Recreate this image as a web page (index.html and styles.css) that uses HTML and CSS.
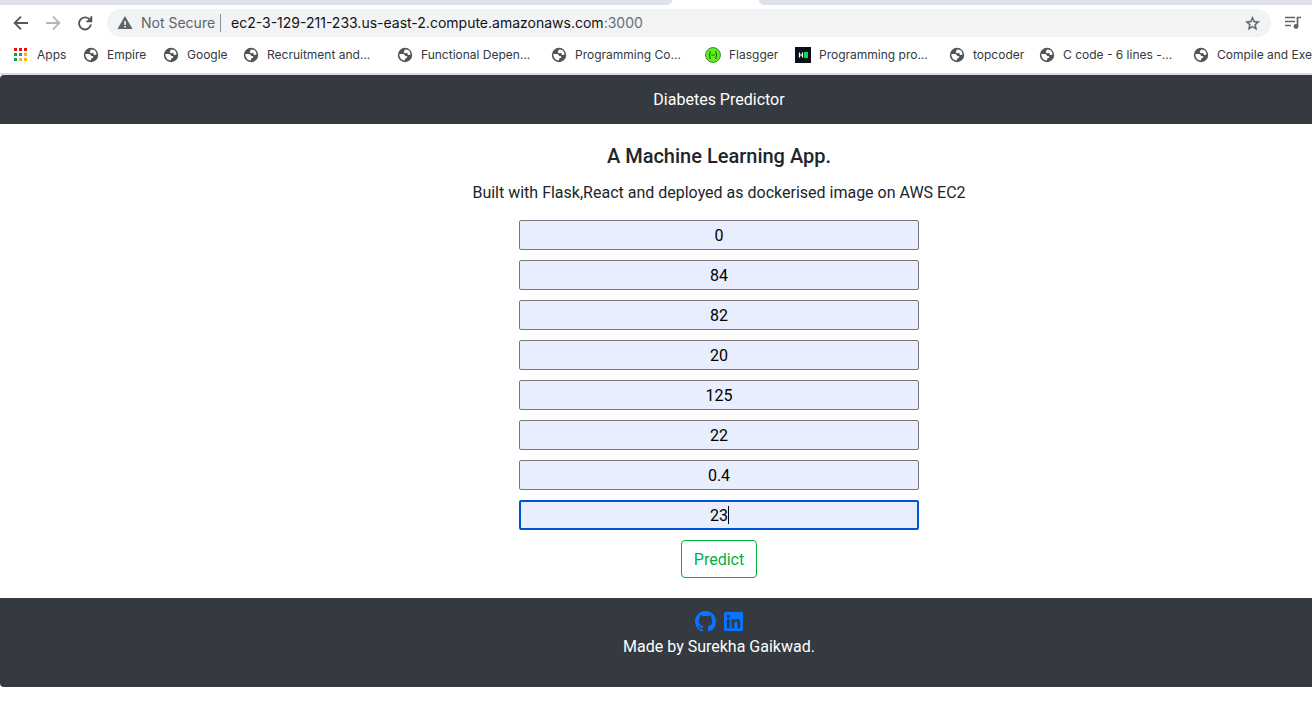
FILE: index.html
```html
<!DOCTYPE html>
<html lang="en">
<head>
<meta charset="utf-8">
<title>Diabetes Predictor</title>
<link rel="stylesheet" href="styles.css">
</head>
<body>
<svg class="defs" aria-hidden="true">
  <symbol id="globe" viewBox="0 0 16 16">
    <circle cx="8" cy="8" r="7.200" fill="#505357"/>
    <path d="M7.900 2.600L11.300 2.900Q13.600 4.600 13.600 7.500Q12.200 8.300 10.900 7.700L10.300 6.100L8 6.300L6.600 5.300L7.200 4Z" fill="#fff"/>
    <path d="M2.500 6.900L6 7.100Q7.900 7.400 8.200 8.900L10.300 9.200L10 10.800L8.500 11.200L7.700 13.400Q3 13.300 2.400 8.300Z" fill="#fff"/>
  </symbol>
</svg>
<header class="browser">
  <div class="tabs"><span class="tab-left"></span><span class="tab-right"></span></div>
  <div class="toolbar">
    <button class="tool" aria-label="Back"><svg viewBox="0 0 24 24"><path class="line" d="M22.500 12H3M12 2.500L2.500 12L12 21.500"/></svg></button>
    <button class="tool muted" aria-label="Forward"><svg viewBox="0 0 24 24"><path class="line" d="M1.500 12H21M12 2.500L21.500 12L12 21.500"/></svg></button>
    <button class="tool" aria-label="Reload"><svg viewBox="0 0 24 24"><path class="line" d="M19.500 7.500A9 9 0 1 0 21 14M21.500 2V9.500H14"/><path d="M22.500 2V10.500H14Z" fill="currentColor"/></svg></button>
    <div class="address">
      <svg class="warning" viewBox="0 0 16 16"><path d="M8 1L15.500 14H.5Z" fill="#5f6368"/><path d="M7.300 6h1.500v4H7.300zM7.300 11h1.500v1.500H7.300z" fill="#fff"/></svg>
      <span class="security">Not Secure</span>
      <span class="url">ec2-3-129-211-233.us-east-2.compute.amazonaws.com<span class="port">:3000</span></span>
      <button class="star" aria-label="Bookmark this page"><svg viewBox="0 0 24 24"><path d="M22 9.240l-7.190-.62L12 2 9.190 8.630 2 9.240l5.460 4.730L5.820 21 12 17.270 18.180 21l-1.630-7.030zM12 15.400l-3.760 2.270 1-4.280-3.320-2.880 4.380-.38L12 6.100l1.710 4.040 4.380.38-3.320 2.880 1 4.280z" fill="#5f6368" stroke="#5f6368" stroke-width=".5"/></svg></button>
    </div>
    <button class="media" aria-label="Media"><svg viewBox="0 0 18 16"><path d="M1 2.500h10M1 6.500h10M1 10.500h6" stroke="#5f6368" stroke-width="1.700"/><path d="M17 2.500h-3.500v9" fill="none" stroke="#5f6368" stroke-width="1.700"/><circle cx="12" cy="11.500" r="2.400" fill="#5f6368"/></svg></button>
  </div>
  <nav class="bookmarks" aria-label="Bookmarks">
    <a href="#" class="apps"><svg viewBox="0 0 16 16"><path d="M1 1h3v3H1zM6 1h3v3H6zM11 1h3v3h-3z" fill="#f20d0d"/><path d="M1 6h3v3H1zM1 11h3v3H1z" fill="#0f9d58"/><path d="M6 6h3v3H6z" fill="#1a86f7"/><path d="M11 6h3v3h-3zM6 11h3v3H6zM11 11h3v3h-3z" fill="#fbb30a"/></svg>Apps</a>
    <a href="#" class="short"><svg><use href="#globe"/></svg>Empire</a>
    <a href="#" class="short"><svg><use href="#globe"/></svg>Google</a>
    <a href="#" class="long"><svg><use href="#globe"/></svg>Recruitment and...</a>
    <a href="#" class="long"><svg><use href="#globe"/></svg>Functional Depen...</a>
    <a href="#" class="long"><svg><use href="#globe"/></svg>Programming Co...</a>
    <a href="#" class="medium"><svg viewBox="0 0 16 16"><circle cx="8" cy="8" r="7.400" fill="#5bf516" stroke="#3c7f3a"/><path d="M6 4.500Q4.700 4.500 4.800 6Q5 8 3.700 8Q5 8 4.800 10Q4.700 11.500 6 11.500M10 4.500Q11.300 4.500 11.200 6Q11 8 12.300 8Q11 8 11.200 10Q11.300 11.500 10 11.500M6.200 8h3.600" fill="none" stroke="#245c2c" stroke-width="1.100"/></svg>Flasgger</a>
    <a href="#" class="long"><svg viewBox="0 0 16 16"><path d="M0 0h16v16H0z" fill="#0b111b"/><path d="M4.500 5.500v5M7.500 5.500v5M4.500 8h3" stroke="#fff" stroke-width="1.200"/><path d="M9 5h4v6H9z" fill="#05e052"/></svg>Programming pro...</a>
    <a href="#" class="medium"><svg><use href="#globe"/></svg>topcoder</a>
    <a href="#" class="long"><svg><use href="#globe"/></svg>C code - 6 lines -...</a>
    <a href="#" class="long"><svg><use href="#globe"/></svg>Compile and Exe</a>
  </nav>
</header>
<div class="app">
  <header class="band top">Diabetes Predictor</header>
  <main>
    <h1>A Machine Learning App.</h1>
    <p>Built with Flask,React and deployed as dockerised image on AWS EC2</p>
    <form>
      <input type="text" aria-label="Pregnancies" value="0">
      <input type="text" aria-label="Glucose" value="84">
      <input type="text" aria-label="Blood pressure" value="82">
      <input type="text" aria-label="Skin thickness" value="20">
      <input type="text" aria-label="Insulin" value="125">
      <input type="text" aria-label="BMI" value="22">
      <input type="text" aria-label="Pedigree function" value="0.4">
      <div class="active"><input type="text" aria-label="Age" value="23"><span class="caret"></span></div>
      <button type="button" class="predict">Predict</button>
    </form>
  </main>
  <footer class="band bottom">
    <div class="social">
      <a href="#" aria-label="GitHub"><svg width="21" height="21" viewBox="0 0 16 16"><path fill="currentColor" d="M8 0C3.580 0 0 3.580 0 8c0 3.540 2.290 6.530 5.470 7.590.4.070.55-.17.55-.38 0-.19-.01-.82-.01-1.490-2.010.37-2.530-.49-2.690-.94-.09-.23-.48-.94-.82-1.130-.28-.15-.68-.52-.01-.53.63-.01 1.080.58 1.230.82.72 1.210 1.870.87 2.330.66.07-.52.28-.87.51-1.070-1.780-.2-3.640-.89-3.640-3.950 0-.87.31-1.590.82-2.150-.08-.2-.36-1.020.08-2.120 0 0 .67-.21 2.200.82.64-.18 1.320-.27 2-.27s1.360.09 2 .27c1.530-1.040 2.200-.82 2.200-.82.44 1.100.16 1.920.08 2.120.51.56.82 1.270.82 2.150 0 3.070-1.870 3.750-3.650 3.950.29.25.54.73.54 1.480 0 1.070-.01 1.930-.01 2.200 0 .21.15.46.55.38A8.010 8.010 0 0 0 16 8c0-4.420-3.580-8-8-8z"/></svg></a>
      <a href="#" aria-label="LinkedIn"><svg width="19" height="19" viewBox="0 0 448 448"><path fill="currentColor" d="M416 0H31.900C14.300 0 0 14.500 0 32.300v383.400C0 433.500 14.300 448 31.900 448H416c17.600 0 32-14.500 32-32.300V32.300C448 14.500 433.600 0 416 0zM135.400 384H69V170.200h66.500V384zM102.200 141c-21.300 0-38.500-17.300-38.500-38.500S80.900 64 102.200 64c21.200 0 38.500 17.300 38.500 38.500 0 21.300-17.200 38.500-38.500 38.500zm282.100 243h-66.400V280c0-24.800-.5-56.700-34.500-56.700-34.600 0-39.900 27-39.900 54.900V384h-66.400V170.200h63.700v29.200h.9c8.900-16.800 30.600-34.500 62.900-34.500 67.200 0 79.700 44.300 79.700 101.900V384z"/></svg></a>
    </div>
    <div>Made by Surekha Gaikwad.</div>
  </footer>
</div>
</body>
</html>
```
FILE: styles.css
```css
* { box-sizing: border-box; }
body { margin: 0; background: #fff; font-family: Roboto, "Liberation Sans", sans-serif; font-size: 16px; line-height: 24px; color: #212529; }
button { border: 0; background: none; padding: 0; font: inherit; }
svg { display: block; }
.defs { position: absolute; width: 0; height: 0; }
.browser { border-bottom: 2px solid #dadbdd; height: 75px; font-family: Inter, "Liberation Sans", sans-serif; }
.tabs { display: flex; justify-content: space-between; height: 5px; gap: 87px; }
.tab-left { flex: 0 0 51.2%; background: #dee1e9; border-bottom-right-radius: 5px; }
.tab-right { flex: 1; background: #dee1e9; border-bottom-left-radius: 5px; }
.toolbar { display: flex; align-items: center; height: 36px; padding: 0 10px 0 13px; }
.tool { width: 16px; height: 16px; margin-right: 16px; color: #54585d; }
.tool.muted { color: #b5b7b9; }
.line { fill: none; stroke: currentColor; stroke-width: 2.800; }
.address { flex: 1; display: flex; align-items: center; height: 28px; border-radius: 14px; background: #f1f3f4; padding: 0 10px; margin-right: 13px; margin-left: -2px; font-size: 14px; line-height: 18px; }
.warning { width: 16px; height: 16px; margin-right: 8px; }
.security { color: #5f6368; border-right: 1px solid #8f9295; width: 80px; margin-right: 10px; white-space: nowrap; }
.url { flex: 1; color: #111214; }
.port { color: #6a6e73; }
.star svg { width: 17px; height: 17px; }
.media svg { width: 18px; height: 16px; }
.bookmarks { display: flex; padding-left: 13px; height: 28px; align-items: center; overflow: hidden; }
.bookmarks a { display: flex; flex: none; align-items: center; gap: 8px; color: #35383c; text-decoration: none; font-size: 12px; line-height: 16px; white-space: nowrap; }
.bookmarks svg { width: 16px; height: 16px; flex: none; }
.bookmarks .apps { width: 70px; }
.bookmarks .short { width: 80px; }
.bookmarks .medium { width: 90px; }
.bookmarks .long { width: 154px; }
.bookmarks .long:last-child { width: auto; }
.app { text-align: center; }
.app > * { padding-left: 126px; }
.band { background: #343a40; color: #fff; }
.top { padding-top: 13px; padding-bottom: 12px; border-top-left-radius: 4px; }
main { padding-top: 20px; padding-bottom: 20px; }
h1 { margin: 0 0 13px; font-size: 20px; line-height: 24px; font-weight: 500; }
p { margin: 0 0 15px; }
form { display: flex; flex-direction: column; align-items: center; gap: 10px; }
input { display: block; width: 400px; height: 30px; padding: 1px 2px; border: 1px solid #767676; border-radius: 2px; background: #e8eefe; color: #000; font: inherit; text-align: center; }
.active { position: relative; }
.active input { border: 2px solid #0052d6; outline: 0; }
.caret { position: absolute; left: calc(50% + 9px); top: 6px; width: 1px; height: 18px; background: #000; }
.predict { height: 38px; padding: 1px 12px 0; border: 1px solid #00b140; border-radius: 4px; color: #00b140; }
.bottom { padding-top: 13px; padding-bottom: 28px; border-bottom-left-radius: 4px; }
.social { display: flex; justify-content: center; align-items: center; gap: 8px; height: 21px; margin-bottom: 3px; }
.social a { color: #0a73ff; }
```
